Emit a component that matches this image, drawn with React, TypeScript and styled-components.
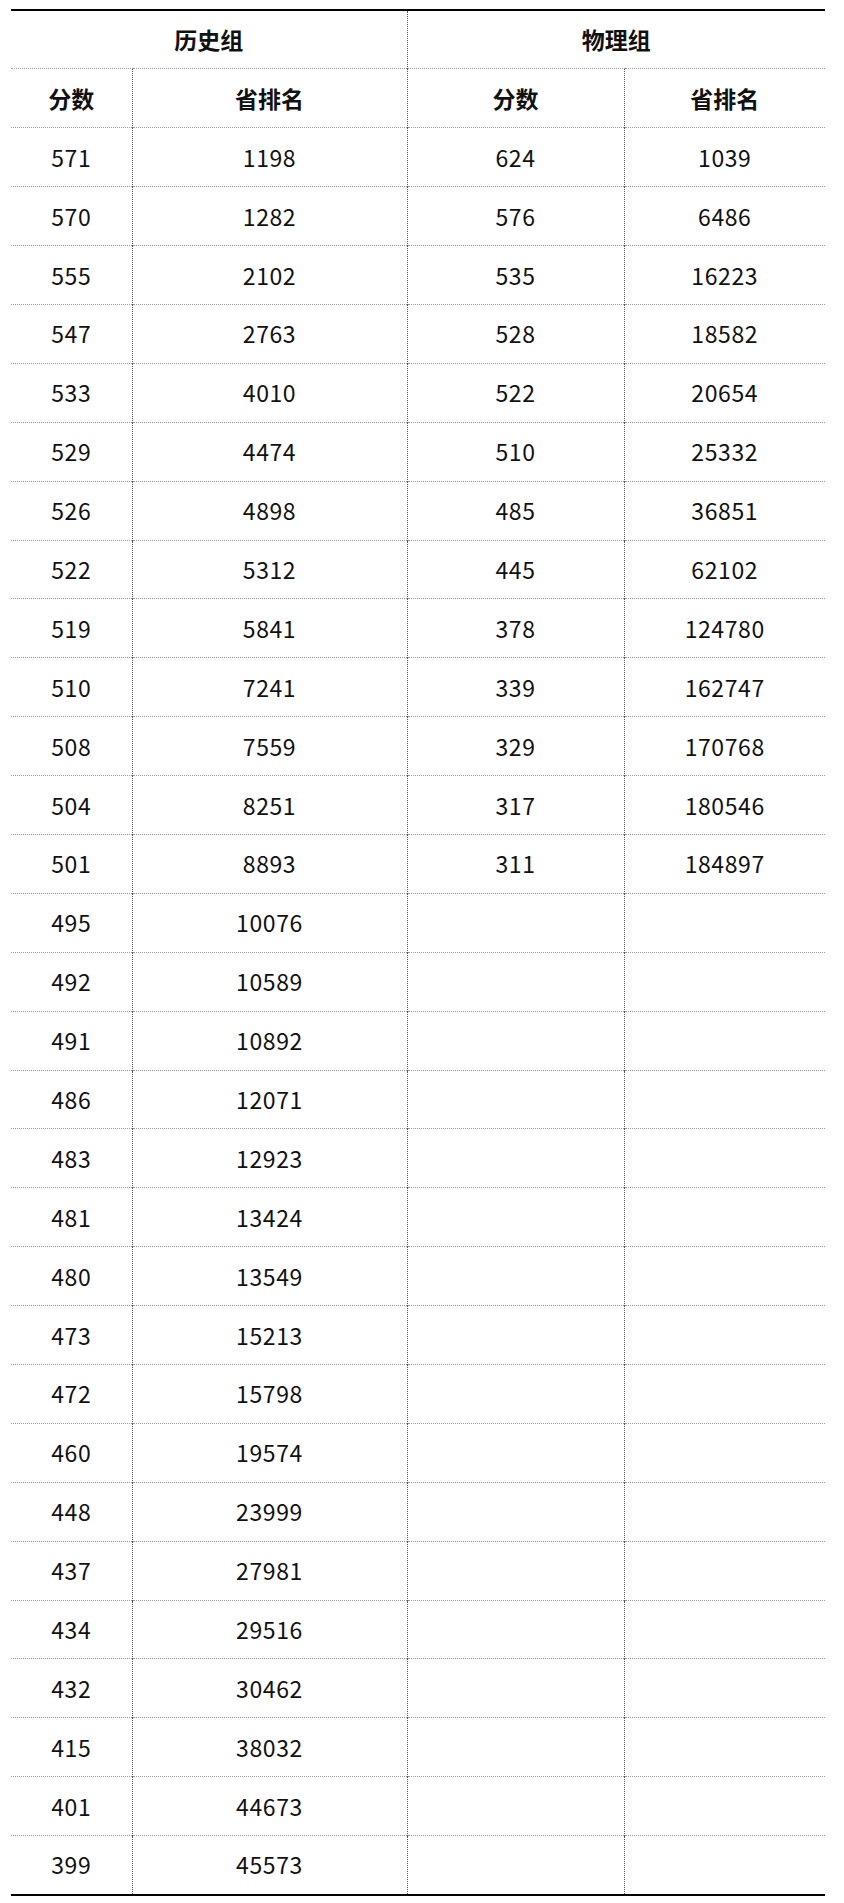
import React from 'react';
import styled, { createGlobalStyle } from 'styled-components';

const history: [number, number][] = [
  [571, 1198], [570, 1282], [555, 2102], [547, 2763], [533, 4010],
  [529, 4474], [526, 4898], [522, 5312], [519, 5841], [510, 7241],
  [508, 7559], [504, 8251], [501, 8893], [495, 10076], [492, 10589],
  [491, 10892], [486, 12071], [483, 12923], [481, 13424], [480, 13549],
  [473, 15213], [472, 15798], [460, 19574], [448, 23999], [437, 27981],
  [434, 29516], [432, 30462], [415, 38032], [401, 44673], [399, 45573],
];

const physics: [number, number][] = [
  [624, 1039], [576, 6486], [535, 16223], [528, 18582], [522, 20654],
  [510, 25332], [485, 36851], [445, 62102], [378, 124780], [339, 162747],
  [329, 170768], [317, 180546], [311, 184897],
];

const GlobalStyle = createGlobalStyle`
  html, body {
    margin: 0;
    padding: 0;
    background: #fff;
  }
  body {
    font-family: "Noto Sans CJK SC", "Noto Sans", sans-serif;
    color: #111;
  }
`;

const Page = styled.div`
  padding: 9px 0 0 11px;
`;

const Table = styled.table`
  width: 814px;
  border-collapse: collapse;
  table-layout: fixed;
  border-top: 2px solid #000;
  border-bottom: 2px solid #000;
`;

const Col = styled.col<{ $w: number }>`
  width: ${(p) => p.$w}px;
`;

const Row = styled.tr`
  height: 58.9px;
`;

const Cell = styled.td<{ $head?: boolean; $edge?: boolean }>`
  padding: 0;
  text-align: center;
  vertical-align: middle;
  font-size: 23px;
  font-weight: ${(p) => (p.$head ? 700 : 400)};
  letter-spacing: ${(p) => (p.$head ? 0 : '0.6px')};
  border-top: 1px dotted #9a9a9a;
  border-left: ${(p) => (p.$edge ? 'none' : '1px dotted #555')};
  line-height: 1;
`;

export default function App() {
  return (
    <Page>
      <GlobalStyle />
      <Table>
        <colgroup>
          <Col $w={121} />
          <Col $w={275} />
          <Col $w={217} />
          <Col $w={201} />
        </colgroup>
        <thead>
          <Row>
            <Cell as="th" colSpan={2} $head $edge>历史组</Cell>
            <Cell as="th" colSpan={2} $head>物理组</Cell>
          </Row>
          <Row>
            <Cell as="th" $head $edge>分数</Cell>
            <Cell as="th" $head>省排名</Cell>
            <Cell as="th" $head>分数</Cell>
            <Cell as="th" $head>省排名</Cell>
          </Row>
        </thead>
        <tbody>
          {history.map(([score, rank], i) => {
            const phy = physics[i];
            return (
              <Row key={i}>
                <Cell $edge>{score}</Cell>
                <Cell>{rank}</Cell>
                <Cell>{phy ? phy[0] : ''}</Cell>
                <Cell>{phy ? phy[1] : ''}</Cell>
              </Row>
            );
          })}
        </tbody>
      </Table>
    </Page>
  );
}
